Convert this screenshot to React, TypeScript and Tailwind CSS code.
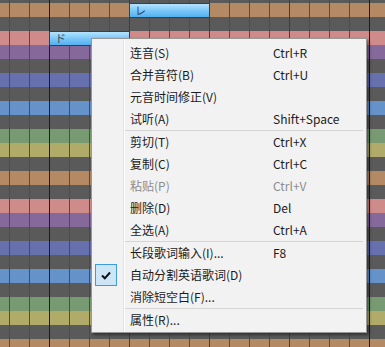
import { Fragment } from "react";

const pattern = [
  "bg-[#5a5a5a]",
  "bg-[#b38a63]",
  "bg-[#5a5a5a]",
  "bg-[#cf8b89]",
  "bg-[#84699a]",
  "bg-[#5a5a5a]",
  "bg-[#6670ad]",
  "bg-[#5a5a5a]",
  "bg-[#6592c8]",
  "bg-[#5a5a5a]",
  "bg-[#779a72]",
  "bg-[#b1ab6a]",
];

type Item = {
  label?: string;
  shortcut?: string;
  disabled?: boolean;
  checked?: boolean;
  sep?: boolean;
};

const items: Item[] = [
  { label: "连音(S)", shortcut: "Ctrl+R" },
  { label: "合并音符(B)", shortcut: "Ctrl+U" },
  { label: "元音时间修正(V)" },
  { label: "试听(A)", shortcut: "Shift+Space" },
  { sep: true },
  { label: "剪切(T)", shortcut: "Ctrl+X" },
  { label: "复制(C)", shortcut: "Ctrl+C" },
  { label: "粘贴(P)", shortcut: "Ctrl+V", disabled: true },
  { label: "删除(D)", shortcut: "Del" },
  { label: "全选(A)", shortcut: "Ctrl+A" },
  { sep: true },
  { label: "长段歌词输入(I)...", shortcut: "F8" },
  { label: "自动分割英语歌词(D)", checked: true },
  { label: "消除短空白(F)..." },
  { sep: true },
  { label: "属性(R)..." },
];

function lineClass(i: number) {
  if (i === 2 || i === 18) return "border-r-[#1c1c1c]";
  if (i === 6 || i === 10 || i === 14) return "border-r-[#3e3e3e]";
  return "border-r-[#4c4c4c]";
}

function Row({ color }: { color: string }) {
  return (
    <div className={`flex h-[14px] shrink-0 ${color}`}>
      {Array.from({ length: 20 }).map((_, i) => (
        <div
          key={i}
          className={`h-full shrink-0 border-r ${lineClass(i)} ${i === 0 ? "w-[10px]" : "w-[20px]"}`}
        />
      ))}
    </div>
  );
}

function Note({ text, cls }: { text: string; cls: string }) {
  return (
    <div
      className={`absolute h-[15px] w-[81px] border border-[#17496f] bg-[linear-gradient(to_bottom,#b4e3ff,#7cc8f8_50%,#52b0f0)] pl-[5px] text-[11px] leading-[13px] text-[#3b4a5c] ${cls}`}
    >
      {text}
    </div>
  );
}

export default function App() {
  const rows = Array.from({ length: 26 }).map((_, i) => pattern[i % 12]);

  return (
    <div className="relative h-[347px] w-[385px] overflow-hidden bg-[#5a5a5a] font-['Noto_Sans_CJK_SC',sans-serif]">
      <div className="mt-[-11px] flex flex-col">
        {rows.map((c, i) => (
          <Row key={i} color={c} />
        ))}
      </div>

      <Note text="レ" cls="left-[129px] top-[3px]" />
      <Note text="ド" cls="left-[49px] top-[31px]" />

      <div className="absolute left-[91px] top-[38px] w-[276px] border border-[#979797] bg-[#f2f2f2] bg-[linear-gradient(to_right,#f2f2f2_31px,#e2e3e3_31px,#e2e3e3_32px,#ffffff_32px,#ffffff_33px,#f2f2f2_33px)] pb-px pt-[3px] text-[12px] text-[#1b1b1b] shadow-[2px_2px_3px_rgba(0,0,0,0.45)]">
        {items.map((it, i) =>
          it.sep ? (
            <div key={i} className="ml-[33px] mr-[3px] h-px bg-[#d5d5d5]" />
          ) : (
            <Fragment key={i}>
              <div className={`flex h-[22px] items-center ${it.disabled ? "text-[#8d8d8d]" : ""}`}>
                <div className="flex w-[38px] shrink-0 pl-[3px]">
                  {it.checked && (
                    <div className="flex h-[22px] w-[22px] items-center justify-center border border-[#3d9be0] bg-[#cce6f8]">
                      <svg width="10" height="9" viewBox="0 0 10 9">
                        <path d="M1 4.5 L3.8 7.3 L9 1.5" fill="none" stroke="#111" strokeWidth="2" />
                      </svg>
                    </div>
                  )}
                </div>
                <div className="w-[143px] shrink-0 whitespace-nowrap">{it.label}</div>
                <div className="whitespace-nowrap">{it.shortcut}</div>
              </div>
            </Fragment>
          ),
        )}
      </div>
    </div>
  );
}
